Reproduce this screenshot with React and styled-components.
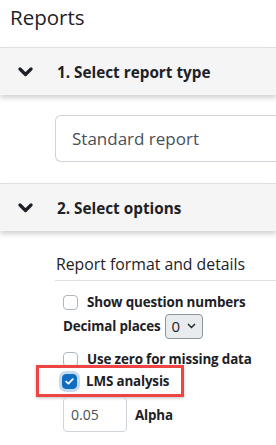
import styled, { createGlobalStyle } from "styled-components";

const GlobalStyle = createGlobalStyle`
  body {
    margin: 0;
    background: #fff;
    font-family: "Open Sans", "Noto Sans", sans-serif;
    color: #1d2125;
    overflow: hidden;
  }
`;

const Page = styled.div`
  width: 276px;
  height: 445px;
  overflow: hidden;
`;

const Title = styled.h2`
  margin: 0;
  padding: 2px 0 0 10px;
  height: 45px;
  font-size: 20.5px;
  font-weight: 400;
  line-height: 30px;
`;

const SectionHeader = styled.div`
  display: flex;
  align-items: center;
  height: 47px;
  border-top: 1px solid #dee2e6;
  background: #f5f5f5;
  box-shadow: 0 3px 5px rgba(0, 0, 0, 0.18);
  position: relative;
  z-index: 1;
`;

const Chevron = styled.span`
  display: flex;
  width: 57px;
  padding-left: 18px;
  box-sizing: border-box;
`;

const HeaderText = styled.span`
  font-size: 15.3px;
  font-weight: 700;
`;

const SectionBody = styled.div`
  padding: ${(p) => p.$pad || "20px 0 21px 55px"};
`;

const SelectBox = styled.div`
  width: 260px;
  height: 47px;
  box-sizing: border-box;
  border: 1px solid #ced4da;
  border-right: none;
  border-radius: 6px 0 0 6px;
  display: flex;
  align-items: center;
  padding-left: 16px;
  font-size: 17px;
  color: #495057;
`;

const Legend = styled.div`
  font-size: 15.8px;
  line-height: 22px;
  padding: 12px 0 5px 1px;
  border-bottom: 1px solid #dee2e6;
`;

const Fields = styled.div`
  padding: 10px 0 0 8px;
  display: flex;
  flex-direction: column;
`;

const CheckRow = styled.label`
  display: flex;
  align-items: center;
  gap: 9px;
  height: 22px;
  padding-top: ${(p) => p.$top || 0}px;
  margin-bottom: ${(p) => p.$bottom || 0}px;
  font-size: 13.4px;
  letter-spacing: -0.15px;
  font-weight: 700;
`;

const Box = styled.span`
  width: 15px;
  height: 15px;
  box-sizing: border-box;
  border-radius: 4px;
  border: 1px solid ${(p) => (p.$checked ? "#0f6cbf" : "#adb5bd")};
  background: ${(p) => (p.$checked ? "#0f6cbf" : "#fff")};
  box-shadow: ${(p) => (p.$checked ? "0 0 0 3px rgba(15, 108, 191, 0.25)" : "none")};
  display: flex;
  align-items: center;
  justify-content: center;
`;

const InlineRow = styled.div`
  display: flex;
  align-items: center;
  gap: ${(p) => p.$gap || 4}px;
  height: ${(p) => p.$h || 26}px;
  font-size: 13.4px;
  letter-spacing: -0.15px;
  font-weight: 700;
`;

const SmallSelect = styled.div`
  width: 38px;
  height: 25px;
  box-sizing: border-box;
  border: 1px solid #8f959e;
  border-radius: 4px;
  background: #e9ecef;
  display: flex;
  align-items: center;
  gap: 7px;
  padding-left: 6px;
  font-size: 15px;
  font-weight: 400;
  letter-spacing: 0;
`;

const Highlight = styled.div`
  margin-left: -27px;
  width: 148px;
  height: 32px;
  box-sizing: border-box;
  border: 3px solid #ef4444;
  box-shadow: 0 1px 3px rgba(0, 0, 0, 0.25);
  display: flex;
  align-items: center;
  padding-left: 23px;
`;

const AlphaInput = styled.div`
  width: 64px;
  height: 35px;
  box-sizing: border-box;
  border: 1px solid #ced4da;
  border-radius: 4px;
  display: flex;
  align-items: center;
  padding-left: 7px;
  font-size: 14px;
  font-weight: 400;
  letter-spacing: 0;
  color: #495057;
`;

const ChevronIcon = () => (
  <svg width="15" height="10" viewBox="0 0 15 10">
    <polyline
      points="2,2 7.5,7.5 13,2"
      fill="none"
      stroke="#1d2125"
      strokeWidth="3.2"
      strokeLinecap="round"
      strokeLinejoin="round"
    />
  </svg>
);

const Check = () => (
  <svg width="9" height="7" viewBox="0 0 9 7">
    <polyline
      points="1.2,3.6 3.4,5.6 7.8,1.2"
      fill="none"
      stroke="#fff"
      strokeWidth="1.8"
      strokeLinecap="round"
      strokeLinejoin="round"
    />
  </svg>
);

const Caret = () => (
  <svg width="9" height="6" viewBox="0 0 9 6">
    <polyline points="1,1 4.5,4.5 8,1" fill="none" stroke="#1d2125" strokeWidth="1.4" />
  </svg>
);

export default function App() {
  return (
    <Page>
      <GlobalStyle />
      <Title>Reports</Title>

      <SectionHeader>
        <Chevron>
          <ChevronIcon />
        </Chevron>
        <HeaderText>1. Select report type</HeaderText>
      </SectionHeader>
      <SectionBody>
        <SelectBox>Standard report</SelectBox>
      </SectionBody>

      <SectionHeader>
        <Chevron>
          <ChevronIcon />
        </Chevron>
        <HeaderText>2. Select options</HeaderText>
      </SectionHeader>
      <SectionBody $pad="10px 0 0 55px">
        <Legend>Report format and details</Legend>
        <Fields>
          <CheckRow>
            <Box />
            Show question numbers
          </CheckRow>
          <InlineRow $h={26}>
            Decimal places
            <SmallSelect>
              0 <Caret />
            </SmallSelect>
          </InlineRow>
          <CheckRow $top={9} $bottom={-5}>
            <Box />
            Use zero for missing data
          </CheckRow>
          <Highlight>
            <CheckRow>
              <Box $checked>
                <Check />
              </Box>
              LMS analysis
            </CheckRow>
          </Highlight>
          <InlineRow $h={35} $gap={8}>
            <AlphaInput>0.05</AlphaInput>
            Alpha
          </InlineRow>
        </Fields>
      </SectionBody>
    </Page>
  );
}
